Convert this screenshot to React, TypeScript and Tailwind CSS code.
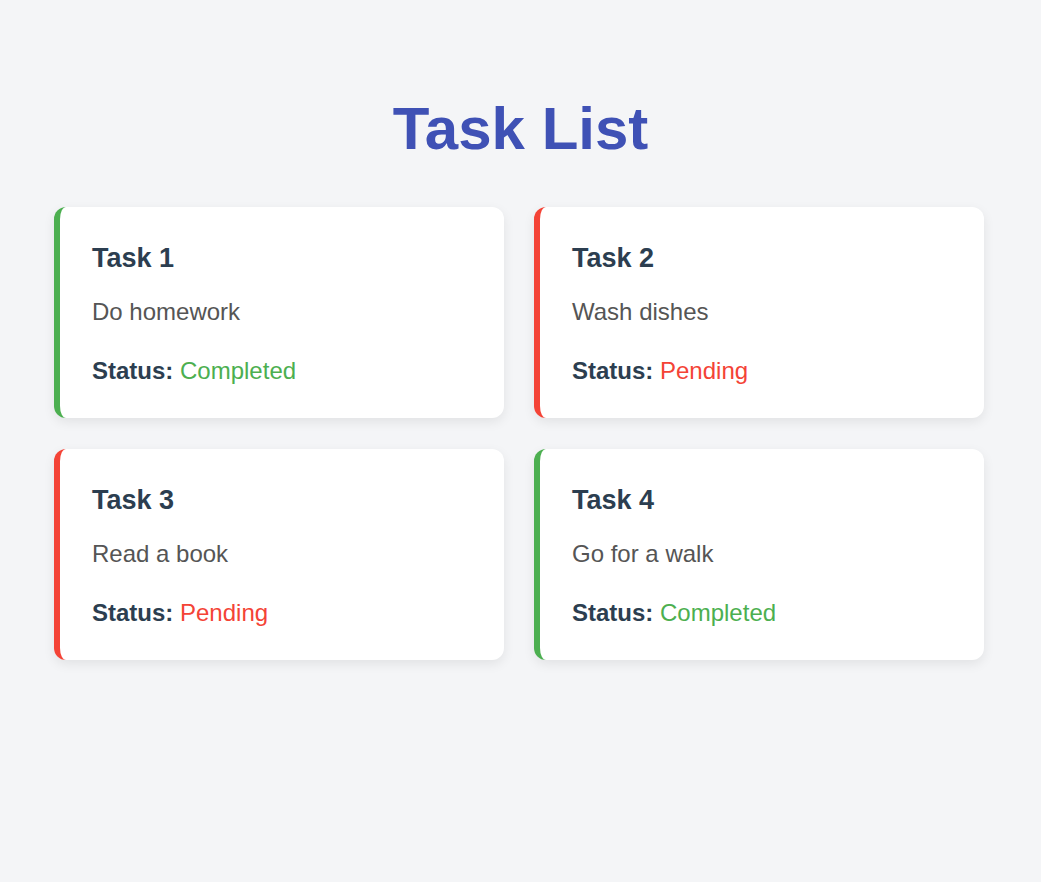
const tasks = [
  { id: 1, title: "Task 1", text: "Do homework", done: true },
  { id: 2, title: "Task 2", text: "Wash dishes", done: false },
  { id: 3, title: "Task 3", text: "Read a book", done: false },
  { id: 4, title: "Task 4", text: "Go for a walk", done: true },
];

export default function App() {
  return (
    <div className="min-h-[882px] bg-[#f4f5f7] pt-[94px] font-['Liberation_Sans',Arial,sans-serif]">
      <h1 className="text-center text-[60px] font-bold leading-[69px] text-[#3f51b5]">Task List</h1>
      <div className="ml-[54px] mt-[44px] grid w-[930px] grid-cols-2 gap-x-[30px] gap-y-[31px]">
        {tasks.map((t) => (
          <div
            key={t.id}
            className={
              "rounded-[12px] border-l-[6px] bg-white px-[32px] pb-[29px] pt-[32px] shadow-[0_4px_12px_rgba(0,0,0,0.08)] " +
              (t.done ? "border-[#4caf50]" : "border-[#f44336]")
            }
          >
            <h2 className="text-[27px] font-bold leading-[39px] text-[#2c3e50]">{t.title}</h2>
            <p className="mt-[16px] text-[24px] leading-[36px] text-[#555]">{t.text}</p>
            <p className="mt-[23px] text-[24px] leading-[36px]">
              <span className="font-bold text-[#2c3e50]">Status:</span>{" "}
              <span className={t.done ? "text-[#4caf50]" : "text-[#f44336]"}>
                {t.done ? "Completed" : "Pending"}
              </span>
            </p>
          </div>
        ))}
      </div>
    </div>
  );
}
